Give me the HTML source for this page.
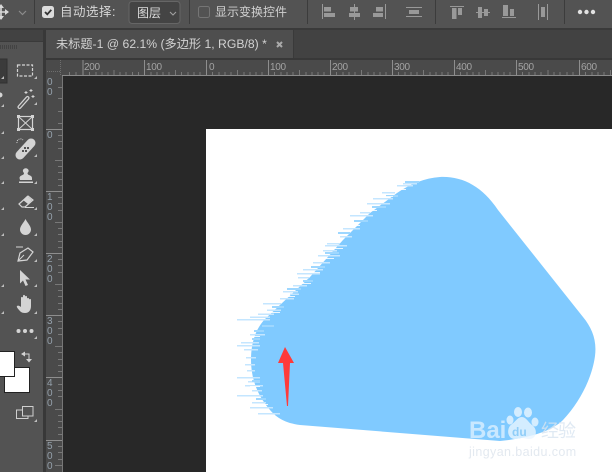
<!DOCTYPE html>
<html><head><meta charset="utf-8">
<style>
html,body{margin:0;padding:0;background:#535353}
#a{position:relative;width:612px;height:472px;overflow:hidden;background:#535353;font-family:"Liberation Sans","Noto Sans CJK SC",sans-serif}
.t{position:absolute;white-space:nowrap;color:#d6d6d6;font-size:12px;line-height:16px}
svg{position:absolute;left:0;top:0}
.r{position:absolute;font-size:10px;line-height:10px;color:#a3a3a3;letter-spacing:-.3px}
.v{position:absolute;left:47px;font-size:10px;line-height:10px;color:#94a0ab}
</style></head><body><div id="a">
<svg width="612" height="472" viewBox="0 0 612 472">
<!-- chrome -->
<rect width="612" height="29" fill="#535353"/>
<rect y="28" width="612" height="2" fill="#3a3a3a"/>
<rect y="30" width="612" height="29" fill="#424242"/>
<rect x="46" y="30" width="247" height="28" fill="#4e4e4e"/>
<rect x="293" y="30" width="1" height="28" fill="#3a3a3a"/>
<rect x="46" y="58" width="566" height="2" fill="#383838"/>
<rect x="0" y="30" width="44" height="12" fill="#424242"/>
<rect x="0" y="41" width="44" height="1" fill="#3a3a3a"/>
<rect x="0" y="42" width="44" height="430" fill="#535353"/>
<rect x="43" y="30" width="3" height="442" fill="#383838"/>
<path d="M0 47h17" stroke="#434343" stroke-width="4" stroke-dasharray="1 1" fill="none"/>
<!-- toolbar separators -->
<g fill="#3c3c3c"><rect x="34" y="0" width="1" height="24"/><rect x="189" y="0" width="1" height="24"/><rect x="307" y="0" width="1" height="24"/><rect x="435" y="0" width="1" height="24"/><rect x="564" y="0" width="1" height="24"/></g>
<!-- move icon -->
<path d="M1 6v13M-6 12h14" stroke="#d8d8d8" stroke-width="1.600" fill="none"/>
<path d="M-2 8 1 4 4 8ZM-2 16l3 4 3-4ZM5 9l4 3-4 3Z" fill="#d8d8d8"/>
<path d="M19 11l3.500 3.500L26 11" stroke="#8c8c8c" stroke-width="1.200" fill="none"/>
<!-- checkbox -->
<rect x="42" y="6" width="12" height="12" rx="2.500" fill="#dcdcdc"/>
<path d="M45 12l2.300 2.300 4-4.500" stroke="#333" stroke-width="1.800" fill="none"/>
<!-- dropdown -->
<rect x="129" y="1.500" width="51" height="22" rx="3" fill="#444" stroke="#666"/>
<path d="M170 12l3 3 3-3" stroke="#a0a0a0" stroke-width="1.100" fill="none"/>
<rect x="198.500" y="6.500" width="11" height="11" rx="2" fill="none" stroke="#757575"/>
<!-- align icons -->
<g fill="#999">
<rect x="322" y="4" width="1" height="15"/><rect x="324" y="7" width="7" height="4.500"/><rect x="324" y="13" width="11" height="4"/>
<rect x="354" y="4" width="1" height="16"/><rect x="350" y="7" width="8" height="4.500"/><rect x="349" y="13" width="11" height="4"/>
<rect x="385" y="4" width="1" height="15"/><rect x="376" y="7" width="7" height="4.500"/><rect x="373" y="13" width="10" height="4"/>
<rect x="406" y="7" width="16" height="1"/><rect x="406" y="16" width="16" height="1"/><rect x="409" y="10" width="10" height="4"/>
<rect x="450" y="6" width="14" height="1"/><rect x="452" y="8" width="4.500" height="11"/><rect x="458" y="8" width="4" height="7"/>
<rect x="476" y="12" width="14" height="1"/><rect x="478" y="7" width="4" height="11"/><rect x="484" y="9" width="4" height="7"/>
<rect x="502" y="17" width="14" height="1"/><rect x="503" y="5" width="5" height="11"/><rect x="510" y="9" width="4" height="7"/>
<rect x="538" y="4" width="1" height="16"/><rect x="547" y="4" width="1" height="16"/><rect x="541" y="7" width="4" height="10"/>
</g>
<g fill="#e2e2e2"><circle cx="580" cy="12" r="2.200"/><circle cx="586.500" cy="12" r="2.200"/><circle cx="593" cy="12" r="2.200"/></g>
<!-- close -->
<path d="M277 42l5 5M282 42l-5 5" stroke="#aaa" stroke-width="2" fill="none"/>
<!-- rulers -->
<rect x="46" y="60" width="566" height="16" fill="#4a4a4a"/>
<rect x="46" y="76" width="16" height="396" fill="#4a4a4a"/>
<path d="M47 71.500h14M60.500 60v15" stroke="#6e6e6e" stroke-dasharray="1 1" fill="none"/>
<rect x="62" y="75" width="550" height="1" fill="#8a8a8a"/>
<rect x="62" y="76" width="1" height="396" fill="#777"/>
<rect x="63" y="76" width="549" height="396" fill="#282828"/>
<g stroke="#8e8e8e" fill="none">
<path d="M83 60v15M144.500 60v15M206.500 60v15M268.500 60v15M330.500 60v15M392.500 60v15M454.500 60v15M516.500 60v15M579.500 60v15"/>
<path d="M46 129.500h16M46 191.500h16M46 253.500h16M46 315.500h16M46 377.500h16M46 440.500h16"/>
</g>
<g stroke="#787878" fill="none">
<path d="M69.500 72v3M76 72v3M89.500 72v3M96 72v3M102 72v3M108 72v3M114 70v5M120 72v3M126 72v3M132.500 72v3M138.500 72v3M151 72v3M157 72v3M163 72v3M169 72v3M175.500 70v5M181.500 72v3M188 72v3M194 72v3M200 72v3M212.500 72v3M219 72v3M225 72v3M231 72v3M237.500 70v5M244 72v3M250 72v3M256 72v3M262 72v3M274.500 72v3M281 72v3M287 72v3M293 72v3M299.500 70v5M306 72v3M312 72v3M318 72v3M324 72v3M336.500 72v3M343 72v3M349 72v3M355 72v3M361.500 70v5M368 72v3M374 72v3M380 72v3M386 72v3M398.500 72v3M405 72v3M411 72v3M417 72v3M423.500 70v5M430 72v3M436 72v3M442 72v3M448 72v3M460.500 72v3M467 72v3M473 72v3M479 72v3M485.500 70v5M492 72v3M498 72v3M504 72v3M510 72v3M522.500 72v3M529 72v3M535 72v3M541 72v3M548 70v5M554 72v3M560 72v3M567 72v3M573 72v3M585.500 72v3M592 72v3M598 72v3M604 72v3M610.500 70v5"/>
<path d="M58 87.500h4M58 98.500h4M58 111.500h4M58 123.500h4M58 135.500h4M58 141.500h4M58 148.500h4M55 160.500h7M58 166.500h4M58 172.500h4M58 179.500h4M58 185.500h4M58 197.500h4M58 203.500h4M58 210.500h4M55 222.500h7M58 228.500h4M58 234.500h4M58 241.500h4M58 247.500h4M58 259.500h4M58 265.500h4M58 272.500h4M55 284.500h7M58 290.500h4M58 296.500h4M58 303.500h4M58 309.500h4M58 321.500h4M58 328.500h4M58 334.500h4M55 346.500h7M58 352.500h4M58 359.500h4M58 365.500h4M58 371.500h4M58 384.500h4M58 390.500h4M58 396.500h4M55 409.500h7M58 415.500h4M58 421.500h4M58 427.500h4M58 434.500h4M58 446.500h4M58 452.500h4M58 459.500h4M55 465.500h7"/>
</g>
<!-- document -->
<rect x="206" y="129" width="406" height="343" fill="#fff"/>
<!-- blob -->
<path d="M440 177C462 176 482 186 498 210L583 317C592 328 597 340 595 356C592 378 580 402 563 420C552 431 530 438 500 441L450 437L300 425C285 423 277 418 270 410C257 395 251 378 251 360C251 342 256 328 266 318L310 277L343 240L370 213L397 193C410 184 425 178 440 177Z" fill="#80caff"/>
<!-- streaks: pale outer -->
<g fill="#c4e6ff">
<rect x="237" y="319" width="33" height="1.500"/><rect x="250" y="316.500" width="20" height="1.500"/><rect x="258" y="313.500" width="16" height="1.500"/><rect x="263" y="303" width="18" height="1.500"/><rect x="267" y="309.500" width="14" height="1.500"/><rect x="283" y="291" width="15" height="1.500"/><rect x="290" y="293.500" width="9" height="1.500"/><rect x="280" y="298" width="14" height="1.500"/><rect x="293" y="285" width="14" height="1.500"/><rect x="298" y="277" width="11" height="1.500"/><rect x="303" y="269" width="20" height="1.500"/><rect x="297" y="273" width="23" height="1.500"/><rect x="313" y="262" width="17" height="1.500"/><rect x="318" y="255" width="22" height="1.500"/><rect x="323" y="250" width="14" height="1.500"/><rect x="325" y="245" width="22" height="1.500"/><rect x="327" y="243" width="13" height="1.500"/><rect x="340" y="236" width="12" height="1.500"/><rect x="343" y="228" width="17" height="1.500"/><rect x="350" y="215" width="23" height="1.500"/><rect x="360" y="212" width="10" height="1.500"/><rect x="367" y="203" width="23" height="1.500"/><rect x="373" y="198" width="20" height="1.500"/><rect x="382" y="192" width="13" height="1.500"/><rect x="397" y="185" width="16" height="1.500"/><rect x="403" y="183" width="14" height="1.500"/>
<rect x="237" y="345" width="23" height="1.500"/><rect x="250" y="334" width="15" height="1.500"/><rect x="246" y="357" width="10" height="1.500"/><rect x="237" y="377" width="23" height="1.500"/><rect x="245" y="385" width="18" height="1.500"/><rect x="237" y="395" width="26" height="1.500"/><rect x="258" y="413" width="22" height="1.500"/><rect x="250" y="407" width="23" height="1.500"/><rect x="241" y="342" width="18" height="1.500"/><rect x="244" y="349" width="14" height="1.500"/><rect x="248" y="381" width="12" height="1.500"/><rect x="252" y="390" width="10" height="1.500"/><rect x="252" y="402" width="14" height="1.500"/><rect x="245" y="364" width="10" height="1.500"/><rect x="247" y="370" width="8" height="1.500"/>
</g>
<!-- streaks: mid tone -->
<g fill="#9ed7ff">
<rect x="262" y="325" width="12" height="2"/><rect x="254" y="330" width="10" height="2"/><rect x="252" y="338" width="8" height="2"/><rect x="252" y="380" width="8" height="2"/><rect x="256" y="398" width="10" height="2"/><rect x="272" y="306" width="12" height="2"/><rect x="287" y="288" width="14" height="2"/><rect x="303" y="280" width="10" height="2"/><rect x="311" y="266" width="14" height="2"/><rect x="325" y="252" width="14" height="2"/><rect x="338" y="232" width="12" height="2"/><rect x="354" y="220" width="14" height="2"/><rect x="372" y="206" width="14" height="2"/><rect x="386" y="195" width="12" height="2"/><rect x="405" y="181" width="14" height="2"/>
</g>
<!-- white bites in the edge -->
<g fill="#fff" opacity=".85">
<rect x="268" y="312" width="12" height="1"/><rect x="285" y="296" width="10" height="1"/><rect x="300" y="283" width="11" height="1"/><rect x="310" y="272" width="10" height="1"/><rect x="322" y="258" width="12" height="1"/><rect x="333" y="248" width="10" height="1"/><rect x="348" y="225" width="12" height="1"/><rect x="365" y="210" width="12" height="1"/><rect x="381" y="196" width="12" height="1"/><rect x="394" y="189" width="12" height="1"/><rect x="250" y="336" width="10" height="1"/><rect x="250" y="386" width="10" height="1"/><rect x="258" y="404" width="10" height="1"/>
</g>
<!-- red arrow -->
<path d="M285 347L294 363H290L288 406H287L283 363H278Z" fill="#ff3a3a"/>
<!-- baidu watermark -->
<g fill="#eaf6ff" opacity=".8">
<ellipse cx="518" cy="412" rx="4" ry="5"/><ellipse cx="528" cy="412.500" rx="4" ry="5"/><ellipse cx="510" cy="420" rx="3.500" ry="4.500"/><ellipse cx="535" cy="422" rx="3.500" ry="4.500"/>
<path d="M522 417c-4 0-6 4-10 7-6 4-5 15 3 15 2 0 5-1 7-1s5 1 7 1c8 0 9-10 3-14-4-3-6-8-10-8z"/>
</g>
<!-- tools: partial top-left selected -->
<rect x="-2" y="59" width="9" height="24" fill="#3b3b3b" stroke="#303030"/>
<!-- marquee -->
<rect x="17.500" y="65" width="15" height="11" fill="none" stroke="#d4d4d4" stroke-width="1.200" stroke-dasharray="3 1.500"/>
<!-- wand -->
<path d="M19.500 107l8-9" stroke="#d4d4d4" stroke-width="4" fill="none" stroke-linecap="round"/>
<path d="M19.500 107l8-9" stroke="#555" stroke-width="1.600" fill="none" stroke-linecap="round"/>
<path d="M31 89v3M29.500 90.500h3M26 91v3M24.500 92.500h3M33 95v3M31.500 96.500h3" stroke="#d4d4d4" fill="none"/>
<!-- frame -->
<rect x="18.500" y="116.500" width="14" height="13" fill="none" stroke="#d4d4d4" stroke-width="1.200"/>
<path d="M18.500 116.500l14 13M32.500 116.500l-14 13" stroke="#d4d4d4" fill="none"/>
<g fill="#d4d4d4"><rect x="17" y="115" width="3" height="3"/><rect x="31" y="115" width="3" height="3"/><rect x="17" y="128" width="3" height="3"/><rect x="31" y="128" width="3" height="3"/></g>
<!-- bandage -->
<path d="M20 155l11-12" stroke="#d4d4d4" stroke-width="9" fill="none" stroke-linecap="round"/>
<g fill="#555"><rect x="24" y="147" width="2" height="2"/><rect x="27" y="147" width="2" height="2"/><rect x="22" y="150" width="2" height="2"/><rect x="25" y="150" width="2" height="2"/></g>
<path d="M17 143a3.500 3.500 0 0 1 6-3" fill="none" stroke="#d4d4d4" stroke-dasharray="1 1"/>
<!-- stamp -->
<path d="M20 180h12v-2q0-2-3-3-1.500-.500-1.500-2 1.500-1.500 1-3a3 3 0 0 0-5.500 0q-.500 1.500 1 3 0 1.500-1.500 2-3 1-3 3z" fill="#d4d4d4"/>
<rect x="19" y="181.500" width="14" height="1.500" fill="#d4d4d4"/>
<!-- eraser -->
<path d="M19 204l9-8 5 4-8 7h-3z" fill="none" stroke="#d4d4d4" stroke-width="1.200"/>
<path d="M23 200l4-4 5 4-4 4z" fill="#d4d4d4"/>
<path d="M25 207.500h9" stroke="#d4d4d4" fill="none"/>
<!-- drop -->
<path d="M25.500 219c2 4 5.500 7 5.500 10.500a5.500 5.500 0 0 1-11 0c0-3.500 3.500-6.500 5.500-10.500z" fill="#d4d4d4"/>
<!-- pen -->
<path d="M18 261l2-8 8-5 5 4-6 8z" fill="none" stroke="#d4d4d4" stroke-width="1.200"/>
<path d="M16 247h7M18 261l6-6" stroke="#d4d4d4" fill="none"/>
<!-- arrow -->
<path d="M20 270l10 9.500h-4.500l2.500 5.500-2.500 1-2.500-5.500-3 3z" fill="#d4d4d4"/>
<!-- hand -->
<path d="M21 312c-2-2-5-5-4-6 1-1 3 0 4 1v-9c0-1.500 2-1.500 2 0v-2c0-1.500 2-1.500 2 0v1c0-1.500 2-1.500 2 0v2c0-1.500 2-1.500 2 0v1c0-1.500 2-1.500 2 0v6c0 4-2 7-6 7-2 0-3-.500-4-1z" fill="#d4d4d4"/>
<!-- dots -->
<g fill="#d4d4d4"><circle cx="18.500" cy="331" r="2"/><circle cx="25" cy="331" r="2"/><circle cx="31.500" cy="331" r="2"/></g>
<!-- swap -->
<path d="M24 354h5v8" stroke="#d4d4d4" fill="none"/>
<path d="M25 351.500v5l-4-2.500zM26 359h6l-3 3.500z" fill="#d4d4d4"/>
<!-- swatches -->
<rect x="4.500" y="367.500" width="25" height="25" fill="#fff" stroke="#222"/>
<rect x="-3" y="351.500" width="17.500" height="25" fill="#fff" stroke="#222"/>
<!-- screen mode -->
<rect x="22.500" y="406.500" width="10.500" height="9.500" fill="none" stroke="#cfcfcf"/>
<path d="M22.500 410H16.500v8.500H28V416" fill="none" stroke="#cfcfcf"/>
<!-- corner triangles -->
<g fill="#bdbdbd"><path d="M37 76v3h-3zM37 102v3h-3zM37 154v3h-3zM37 181v3h-3zM37 207v3h-3zM37 233v3h-3zM37 259v3h-3zM37 284v3h-3zM37 311v3h-3zM37 336v3h-3zM37 419v3h-3zM4 76v3h-3zM4 104v3h-3zM4 131v3h-3zM4 156v3h-3zM4 181v3h-3zM4 207v3h-3zM4 233v3h-3zM4 284v3h-3zM4 311v3h-3z"/></g>
<circle cx="0" cy="95" r="2.500" fill="#d4d4d4"/>
</svg>

<div class="t" style="left:60px;top:4px;letter-spacing:.5px;font-size:12.500px">自动选择:</div>
<div class="t" style="left:137px;top:5px;font-size:12px;color:#ddd">图层</div>
<div class="t" style="left:215px;top:4px;font-size:12px;color:#cfcfcf">显示变换控件</div>
<div class="t" style="left:56px;top:36px;font-size:12.200px;color:#d2d2d2">未标题-1 @ 62.1% (多边形 1, RGB/8) *</div>

<span class="r" style="left:84px;top:63px">200</span>
<span class="r" style="left:146px;top:63px">100</span>
<span class="r" style="left:209px;top:63px">0</span>
<span class="r" style="left:270px;top:63px">100</span>
<span class="r" style="left:332px;top:63px">200</span>
<span class="r" style="left:394px;top:63px">300</span>
<span class="r" style="left:456px;top:63px">400</span>
<span class="r" style="left:518px;top:63px">500</span>
<span class="r" style="left:581px;top:63px">600</span>

<span class="v" style="top:78px">0</span><span class="v" style="top:88px">0</span>
<span class="v" style="top:131px">0</span>
<span class="v" style="top:193px">1</span><span class="v" style="top:203px">0</span><span class="v" style="top:213px">0</span>
<span class="v" style="top:255px">2</span><span class="v" style="top:265px">0</span><span class="v" style="top:275px">0</span>
<span class="v" style="top:317px">3</span><span class="v" style="top:327px">0</span><span class="v" style="top:337px">0</span>
<span class="v" style="top:379px">4</span><span class="v" style="top:389px">0</span><span class="v" style="top:399px">0</span>
<span class="v" style="top:442px">5</span><span class="v" style="top:452px">0</span><span class="v" style="top:462px">0</span>

<div class="t" style="left:469px;top:418px;font-size:24px;line-height:26px;font-weight:bold;color:rgba(232,245,255,.7)">Bai</div>
<div class="t" style="left:512px;top:425px;font-size:12px;line-height:14px;font-weight:bold;color:#8fcdf8">du</div>
<div class="t" style="left:541px;top:420px;font-size:18px;line-height:22px;letter-spacing:-1px;color:rgba(215,228,240,.8)">经验</div>
<div class="t" style="left:469px;top:445px;font-size:12.500px;line-height:14px;letter-spacing:.4px;color:rgba(220,228,236,.8)">jingyan.baidu.com</div>
</div></body></html>
